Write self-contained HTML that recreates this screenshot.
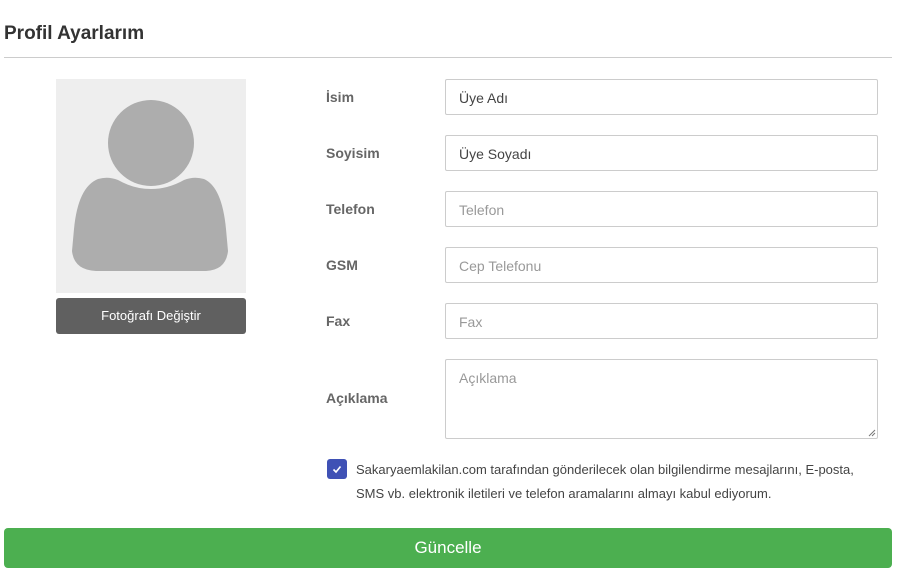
<!DOCTYPE html>
<html><head><meta charset="utf-8"><style>
*{box-sizing:border-box;margin:0;padding:0}
body{width:902px;height:571px;background:#fff;font-family:"Liberation Sans",sans-serif;position:relative;overflow:hidden}
.a{position:absolute}
h1{position:absolute;left:4px;top:23px;font-size:19px;font-weight:bold;color:#333}
.hr{left:4px;top:57px;width:888px;height:1px;background:#ccc}
.lbl{left:326px;font-size:14px;font-weight:bold;color:#666}
.in{left:445px;width:433px;height:36px;border:1px solid #ccc;border-radius:2px;font-size:14px;color:#999;padding:10px 0 0 13px}
.in.v{color:#444}
</style></head><body>
<h1>Profil Ayarlarım</h1>
<div class="a hr"></div>
<div class="a" style="left:56px;top:79px;width:190px;height:214px;background:#eee">
<svg width="190" height="214" viewBox="0 0 190 214">
<circle cx="95" cy="64" r="43" fill="#adadad"/>
<path d="M42 100 Q52 97 62 101 Q78 110 95 110 Q112 110 128 101 Q138 97 148 100 Q166 108 170 150 L172 172 Q170 191 150 192 L40 192 Q18 191 16 172 L18 150 Q22 108 42 100 Z" fill="#adadad"/>
</svg></div>
<div class="a" style="left:56px;top:298px;width:190px;height:36px;background:#606060;border-radius:3px;color:#fff;font-size:13px;text-align:center;line-height:36px">Fotoğrafı Değiştir</div>
<div class="a lbl" style="top:89px">İsim</div>
<div class="a lbl" style="top:145px">Soyisim</div>
<div class="a lbl" style="top:201px">Telefon</div>
<div class="a lbl" style="top:257px">GSM</div>
<div class="a lbl" style="top:313px">Fax</div>
<div class="a lbl" style="top:390px">Açıklama</div>
<div class="a in v" style="top:79px">Üye Adı</div>
<div class="a in v" style="top:135px">Üye Soyadı</div>
<div class="a in" style="top:191px">Telefon</div>
<div class="a in" style="top:247px">Cep Telefonu</div>
<div class="a in" style="top:303px">Fax</div>
<div class="a in" style="top:359px;height:80px;padding-top:10px">Açıklama
<svg class="a" style="right:1px;bottom:1px" width="8" height="8"><path d="M1 7 L7 1 M4 7 L7 4" stroke="#777" stroke-width="1"/></svg></div>
<div class="a" style="left:327px;top:459px;width:20px;height:20px;background:#3f51b5;border-radius:3px">
<svg width="20" height="20"><path d="M6.5 10.5 L9 13 L13.5 7.5" stroke="#fff" stroke-width="1.6" fill="none"/></svg></div>
<div class="a" style="left:356px;top:458px;font-size:13px;color:#444;line-height:24px;width:540px">Sakaryaemlakilan.com tarafından gönderilecek olan bilgilendirme mesajlarını, E-posta,<br>SMS vb. elektronik iletileri ve telefon aramalarını almayı kabul ediyorum.</div>
<div class="a" style="left:4px;top:528px;width:888px;height:40px;background:#4caf50;border-radius:4px;color:#fff;font-size:17px;text-align:center;line-height:40px">Güncelle</div>
</body></html>
